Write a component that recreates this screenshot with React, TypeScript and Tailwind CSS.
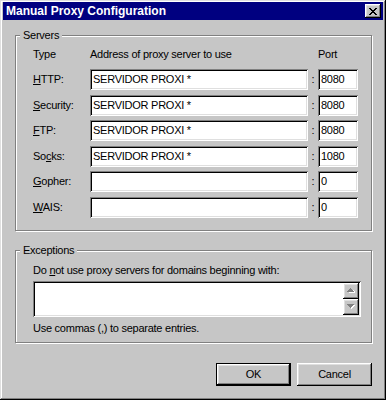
const font = "font-['Liberation_Sans',Arial,sans-serif]";
const raised =
  "shadow-[inset_-1px_-1px_#000,inset_1px_1px_#fff,inset_-2px_-2px_#808080,inset_2px_2px_#dfdfdf]";
const sunken =
  "bg-white shadow-[inset_1px_1px_#808080,inset_-1px_-1px_#fff,inset_2px_2px_#000,inset_-2px_-2px_#dfdfdf]";
const etched =
  "relative border border-[#808080] shadow-[inset_1px_1px_#fff,1px_1px_#fff]";

const CloseGlyph = () => {
  const rows = ["11000011", "01100110", "00111100", "00011000", "00111100", "01100110", "11000011"];
  return (
    <svg width="8" height="7" viewBox="0 0 8 7" shapeRendering="crispEdges">
      {rows.flatMap((r, y) =>
        r.split("").map((c, x) => (c === "1" ? <rect key={`${x}-${y}`} x={x} y={y} width="1" height="1" fill="#000" /> : null))
      )}
    </svg>
  );
};

const Arrow = ({ up }: { up: boolean }) => (
  <svg width="8" height="5" viewBox="0 0 8 5" shapeRendering="crispEdges">
    {up ? (
      <>
        <path d="M2 4h7v1h-7z M3 3h5v1h-5z M4 2h3v1h-3z" fill="#fff" />
        <path d="M0 3h7v1h-7z M1 2h5v1h-5z M2 1h3v1h-3z M3 0h1v1h-1z" fill="#808080" />
      </>
    ) : (
      <>
        <path d="M1 1h7v1h-7z M2 2h5v1h-5z M3 3h3v1h-3z M4 4h1v1h-1z" fill="#fff" />
        <path d="M0 0h7v1h-7z M1 1h5v1h-5z M2 2h3v1h-3z M3 3h1v1h-1z" fill="#808080" />
      </>
    )}
  </svg>
);

const rows: { pre: string; key: string; post: string; host: string; port: string }[] = [
  { pre: "", key: "H", post: "TTP:", host: "SERVIDOR PROXI *", port: "8080" },
  { pre: "", key: "S", post: "ecurity:", host: "SERVIDOR PROXI *", port: "8080" },
  { pre: "", key: "F", post: "TP:", host: "SERVIDOR PROXI *", port: "8080" },
  { pre: "So", key: "c", post: "ks:", host: "SERVIDOR PROXI *", port: "1080" },
  { pre: "", key: "G", post: "opher:", host: "", port: "0" },
  { pre: "", key: "W", post: "AIS:", host: "", port: "0" },
];

export default function App() {
  return (
    <div
      className={`${font} text-[11px] leading-[13px] tracking-[-0.25px] text-black w-[386px] h-[400px] bg-[#c6c6c6] flex flex-col pt-[2px] px-[3px] shadow-[inset_-1px_-1px_#000,inset_1px_1px_#dfdfdf,inset_-2px_-2px_#808080,inset_2px_2px_#fff]`}
    >
      <div className="h-[18px] bg-[#000080] flex items-center justify-between">
        <span className="pl-[3px] text-white font-bold text-[12px] tracking-[0px]">Manual Proxy Configuration</span>
        <button className={`w-[16px] h-[14px] mr-[2px] bg-[#c6c6c6] flex items-center justify-center ${raised}`}>
          <CloseGlyph />
        </button>
      </div>

      <div className="mx-[12px] mr-[11px] mt-[15px]">
        <div className={`${etched} pt-[12px] pb-[12px] pl-[17px]`}>
          <span className="absolute -top-[7px] left-[4px] px-[3px] bg-[#c6c6c6]">Servers</span>
          <div className="flex h-[13px]">
            <span className="w-[57px]">Type</span>
            <span className="w-[228px]">Address of proxy server to use</span>
            <span>Port</span>
          </div>
          <div className="mt-[8px] flex flex-col gap-[4.6px]">
            {rows.map((r) => (
              <div key={r.key} className="flex items-center h-[21px]">
                <span className="w-[57px]">
                  {r.pre}
                  <u>{r.key}</u>
                  {r.post}
                </span>
                <div className={`w-[218px] h-[21px] ${sunken} flex items-center pl-[3px]`}>{r.host}</div>
                <span className="w-[10px] text-center">:</span>
                <div className={`w-[40px] h-[21px] ${sunken} flex items-center pl-[3px]`}>{r.port}</div>
              </div>
            ))}
          </div>
        </div>

        <div className={`${etched} mt-[19px] pt-[13px] pb-[7px] pl-[17px] pr-[10px]`}>
          <span className="absolute -top-[7px] left-[4px] px-[3px] bg-[#c6c6c6]">Exceptions</span>
          <div>
            Do <u>n</u>ot use proxy servers for domains beginning with:
          </div>
          <div className={`mt-[4px] h-[36px] ${sunken} flex justify-end p-[2px]`}>
            <div className="flex flex-col w-[16px]">
              <div className={`h-[16px] bg-[#c6c6c6] ${raised} flex items-center justify-center`}>
                <Arrow up />
              </div>
              <div className={`h-[16px] bg-[#c6c6c6] ${raised} flex items-center justify-center`}>
                <Arrow up={false} />
              </div>
            </div>
          </div>
          <div className="mt-[5px]">Use commas (,) to separate entries.</div>
        </div>

        <div className="mt-[20px] flex justify-end gap-[6px]">
          <button className="w-[75px] h-[23px] border border-black">
            <div className={`w-full h-full bg-[#c6c6c6] ${raised} flex items-center justify-center`}>OK</div>
          </button>
          <button className={`w-[75px] h-[23px] bg-[#c6c6c6] ${raised} flex items-center justify-center`}>
            Cancel
          </button>
        </div>
      </div>
    </div>
  );
}
